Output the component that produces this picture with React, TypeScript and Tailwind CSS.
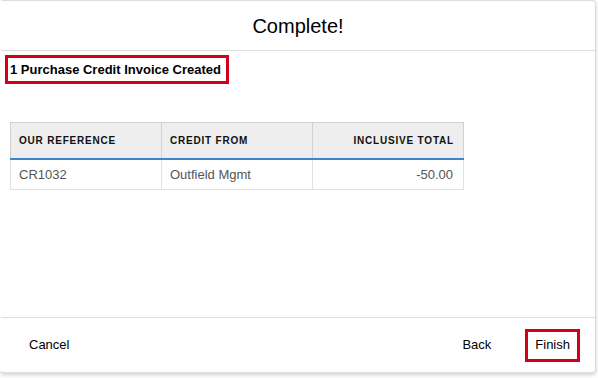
import React from "react";

export default function App() {
  const font = { fontFamily: '"Liberation Sans", Arial, sans-serif' };
  return (
    <div className="w-[598px] h-[378px] bg-white" style={font}>
      <div className="w-[596px] h-[373px] flex flex-col bg-white border border-[#dddddd] border-l-white rounded-[4px] shadow-[0_2px_4px_rgba(0,0,0,0.18)]">
        <div className="h-[50px] shrink-0 flex items-center justify-center border-b border-[#dddddd] text-[20px] text-black">
          Complete!
        </div>
        <div className="flex-1 pt-[4px] pl-[4px]">
          <div className="inline-flex items-center h-[29px] border-[3px] border-[#d0021b] pl-[2px] pr-[5px] text-[13px] font-bold text-black">
            1 Purchase Credit Invoice Created
          </div>
          <table className="mt-[38px] ml-[5px] w-[454px] border-collapse table-fixed">
            <thead>
              <tr className="bg-[#eeeeee] h-[36px]">
                <th className="w-[151px] border border-[#d2d2d2] border-b-[#3a86c8] border-b-[2px] text-left pl-[8px] text-[10px] font-bold tracking-[0.8px] text-[#111]">OUR REFERENCE</th>
                <th className="w-[151px] border border-[#d2d2d2] border-b-[#3a86c8] border-b-[2px] text-left pl-[8px] text-[10px] font-bold tracking-[0.8px] text-[#111]">CREDIT FROM</th>
                <th className="border border-[#d2d2d2] border-b-[#3a86c8] border-b-[2px] text-right pr-[9px] text-[10px] font-bold tracking-[0.8px] text-[#111]">INCLUSIVE TOTAL</th>
              </tr>
            </thead>
            <tbody>
              <tr className="h-[31px]">
                <td className="border border-[#e2e2e2] pl-[8px] text-[13px] text-[#555]">CR1032</td>
                <td className="border border-[#e2e2e2] pl-[8px] text-[13px] text-[#555]">Outfield Mgmt</td>
                <td className="border border-[#e2e2e2] pr-[10px] text-right text-[13px] text-[#555]">-50.00</td>
              </tr>
            </tbody>
          </table>
        </div>
        <div className="h-[55px] shrink-0 border-t border-[#dddddd] flex items-center justify-between pl-[18px] pr-[15px]">
          <button className="h-[33px] border-[3px] border-transparent px-[7px] text-[13px] text-black">Cancel</button>
          <div className="flex items-center gap-[24px]">
            <button className="h-[33px] border-[3px] border-transparent px-[7px] text-[13px] text-black">Back</button>
            <button className="h-[33px] border-[3px] border-[#d0021b] px-[7px] text-[13px] text-black">Finish</button>
          </div>
        </div>
      </div>
    </div>
  );
}
